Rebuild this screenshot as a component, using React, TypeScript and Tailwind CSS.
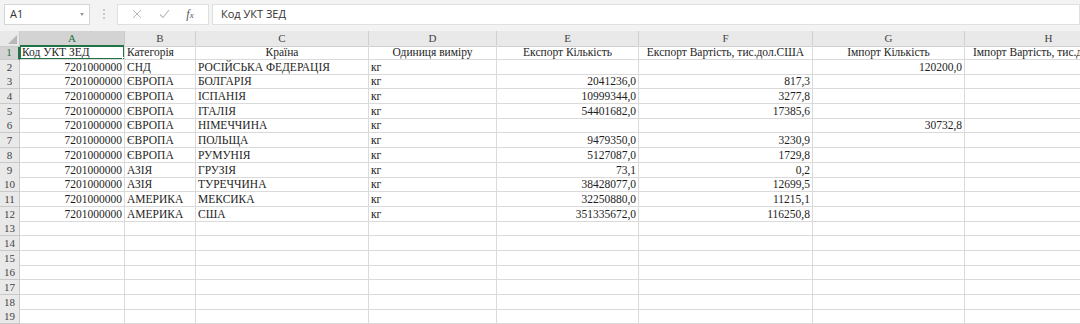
import React from 'react';

type Row = [string, string, string, string, string, string, string];

const rows: Row[] = [
  ['7201000000', 'СНД', 'РОСІЙСЬКА ФЕДЕРАЦІЯ', 'кг', '', '', '120200,0'],
  ['7201000000', 'ЄВРОПА', 'БОЛГАРІЯ', 'кг', '2041236,0', '817,3', ''],
  ['7201000000', 'ЄВРОПА', 'ІСПАНІЯ', 'кг', '10999344,0', '3277,8', ''],
  ['7201000000', 'ЄВРОПА', 'ІТАЛІЯ', 'кг', '54401682,0', '17385,6', ''],
  ['7201000000', 'ЄВРОПА', 'НІМЕЧЧИНА', 'кг', '', '', '30732,8'],
  ['7201000000', 'ЄВРОПА', 'ПОЛЬЩА', 'кг', '9479350,0', '3230,9', ''],
  ['7201000000', 'ЄВРОПА', 'РУМУНІЯ', 'кг', '5127087,0', '1729,8', ''],
  ['7201000000', 'АЗІЯ', 'ГРУЗІЯ', 'кг', '73,1', '0,2', ''],
  ['7201000000', 'АЗІЯ', 'ТУРЕЧЧИНА', 'кг', '38428077,0', '12699,5', ''],
  ['7201000000', 'АМЕРИКА', 'МЕКСИКА', 'кг', '32250880,0', '11215,1', ''],
  ['7201000000', 'АМЕРИКА', 'США', 'кг', '351335672,0', '116250,8', ''],
];

const cols = ['A', 'B', 'C', 'D', 'E', 'F', 'G', 'H'];
const headers = [
  'Код УКТ ЗЕД',
  'Категорія',
  'Країна',
  'Одиниця виміру',
  'Експорт Кількість',
  'Експорт Вартість, тис.дол.США',
  'Імпорт Кількість',
  'Імпорт Вартість, тис.дол.США',
];
const headerAlign = ['text-left', 'text-left', 'text-center', 'text-center', 'text-center', 'text-center', 'text-center', 'text-center'];
const dataAlign = ['text-right', 'text-left', 'text-left', 'text-left', 'text-right', 'text-right', 'text-right', 'text-right'];

const grid = 'grid grid-cols-[20px_105px_71px_173px_128px_142px_174px_152px_168px]';
const serif = "font-['Liberation_Serif','Times_New_Roman',serif]";

const FormulaBar: React.FC = () => (
  <div className="flex h-[28px] items-center bg-[#f3f3f3] pl-[4px] font-['Open_Sans','Liberation_Sans',sans-serif]">
    <div className="relative flex h-[21px] w-[86px] items-center border border-[#d6d6d6] bg-white pl-[5px] text-[11px] text-[#333]">
      A1
      <span className="absolute right-[5px] top-[8px] h-0 w-0 border-x-[2.5px] border-t-[3px] border-x-transparent border-t-[#999]" />
    </div>
    <div className="flex w-[27px] flex-col items-center justify-center gap-[2px]">
      <span className="h-[2px] w-[2px] rounded-full bg-[#bbb]" />
      <span className="h-[2px] w-[2px] rounded-full bg-[#bbb]" />
      <span className="h-[2px] w-[2px] rounded-full bg-[#bbb]" />
    </div>
    <div className="flex h-[21px] w-[92px] items-center justify-around border border-[#e0e0e0] bg-white px-[6px]">
      <svg width="10" height="10" viewBox="0 0 10 10" className="stroke-[#b8b8b8]" fill="none" strokeWidth="1">
        <path d="M1 1 L9 9 M9 1 L1 9" />
      </svg>
      <svg width="11" height="10" viewBox="0 0 11 10" className="stroke-[#b8b8b8]" fill="none" strokeWidth="1.1">
        <path d="M1 5.5 L4 8.5 L10 1" />
      </svg>
      <span className="font-['Liberation_Serif',serif] text-[12px] italic text-[#555]">
        f<span className="text-[9px]">x</span>
      </span>
    </div>
    <div className="ml-[3px] flex h-[21px] flex-1 items-center border border-[#e0e0e0] bg-white pl-[8px] text-[11px] text-[#333]">
      Код УКТ ЗЕД
    </div>
  </div>
);

const App: React.FC = () => {
  const rowCells = (r: number) => {
    if (r === 1) return headers;
    const d = rows[r - 2];
    return d ? [...d, ''] : ['', '', '', '', '', '', '', ''];
  };

  return (
    <div className="h-[324px] w-[1080px] overflow-hidden bg-white">
      <FormulaBar />
      <div className="h-[3px] bg-[#f3f3f3]" />
      <div className={`${grid} ${serif} h-[14px] text-[11px] leading-[14px] text-[#444]`}>
        <div className="relative border-b border-r border-[#c9c9c9] bg-[#e9e9e9]">
          <span className="absolute bottom-[2px] right-[2px] h-0 w-0 border-b-[9px] border-l-[9px] border-b-[#b7b7b7] border-l-transparent" />
        </div>
        {cols.map((c, i) => (
          <div
            key={c}
            className={
              i === 0
                ? 'border-b-2 border-r border-b-[#217346] border-r-[#c9c9c9] bg-[#d3d3d3] text-center text-[#217346]'
                : 'border-b border-r border-[#d0d0d0] bg-[#e9e9e9] text-center'
            }
          >
            {c}
          </div>
        ))}
      </div>
      {Array.from({ length: 19 }, (_, k) => k + 1).map((r) => (
        <div key={r} className={`${grid} ${serif} h-[14.7px] text-[11.5px] leading-[14px] text-[#1e1e1e]`}>
          <div
            className={
              r === 1
                ? 'border-b border-r-2 border-b-[#c9c9c9] border-r-[#217346] bg-[#d3d3d3] text-center text-[11px] text-[#217346]'
                : 'border-b border-r border-[#c9c9c9] bg-[#e9e9e9] text-center text-[11px] text-[#444]'
            }
          >
            {r}
          </div>
          {rowCells(r).map((v, i) => (
            <div
              key={i}
              className={`relative whitespace-nowrap border-b border-r border-[#dadada] px-[2px] ${
                r === 1 ? headerAlign[i] : dataAlign[i]
              } ${i === 7 ? 'overflow-visible' : 'overflow-hidden'}`}
            >
              {v}
              {r === 1 && i === 0 && (
                <>
                  <span className="absolute -left-px -top-px bottom-[-1px] right-[-1px] border-2 border-[#217346]" />
                  <span className="absolute bottom-[-3px] right-[-3px] h-[5px] w-[5px] border border-white bg-[#217346]" />
                </>
              )}
            </div>
          ))}
        </div>
      ))}
    </div>
  );
};

export default App;
